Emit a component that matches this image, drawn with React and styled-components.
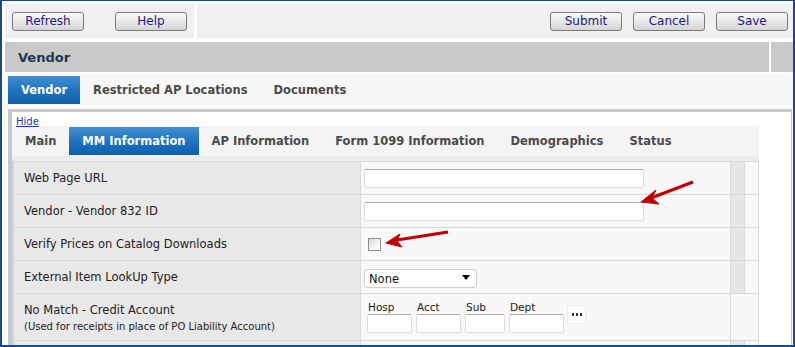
import styled, { createGlobalStyle } from "styled-components";

const GlobalStyle = createGlobalStyle`
  html, body { margin: 0; padding: 0; background: #fff; }
  body { font-family: "DejaVu Sans", Verdana, sans-serif; }
  * { box-sizing: border-box; }
`;

const Frame = styled.div`
  position: relative;
  width: 795px;
  height: 347px;
  overflow: hidden;
  background: #fff;
  border: 2px solid #1a4b7e;
  border-top-width: 1px;
  padding: 3px 0 0 3px;
`;

const Toolbar = styled.div`
  display: flex;
  gap: 3px;
  height: 34px;
`;

const ToolGroup = styled.div`
  display: flex;
  align-items: center;
  background: #f0f0f0;
  gap: ${(p) => p.$gap}px;
  ${(p) =>
    p.$right
      ? "flex: 1; justify-content: flex-end; padding-right: 5px;"
      : "width: 189px; padding-left: 7px;"}
`;

const Button = styled.button`
  width: 72px;
  height: 19px;
  padding: 0;
  border: 1px solid #7a7a7a;
  border-radius: 3px;
  background: linear-gradient(#fbfbfb, #e6e6e6 55%, #d4d4d4);
  font-family: "DejaVu Sans", Verdana, sans-serif;
  font-size: 12px;
  color: #24168c;
  line-height: 17px;
`;

const TitleBar = styled.div`
  display: flex;
  gap: 2px;
  height: 30px;
  margin-top: 4px;
`;

const TitleMain = styled.div`
  flex: 1;
  display: flex;
  align-items: center;
  padding-left: 13px;
  background: #c8c9c8;
  font-weight: bold;
  font-size: 13px;
  color: #1f3550;
`;

const TitleSide = styled.div`
  width: 22px;
  background: #c8c9c8;
`;

const TabRow = styled.div`
  display: flex;
  align-items: flex-start;
  height: 35px;
  margin-top: 2px;
  padding: 2px 0 0 3px;
  background: #f8f8f8;
`;

const SubTabRow = styled.div`
  display: flex;
  align-items: flex-start;
  width: 747px;
  height: 29px;
  padding-top: 1px;
  background: #f4f4f4;
  border-bottom: 5px solid #ececec;
  box-sizing: content-box;
`;

const Tab = styled.div`
  display: flex;
  align-items: center;
  height: 28px;
  padding: 0 13px;
  font-weight: bold;
  font-size: 11.5px;
  white-space: nowrap;
  color: ${(p) => (p.$active ? "#fff" : "#4a4a4a")};
  background: ${(p) =>
    p.$active ? "linear-gradient(#4390d2, #2074bf 50%, #0f5fab)" : "transparent"};
`;

const Panel = styled.div`
  margin: 0 1px 0 3px;
  height: 240px;
  border-top: 3px solid #c8c8c8;
  border-left: 4px solid #c8c8c8;
  border-right: 1px solid #c8c8c8;
  background: #fff;
`;

const HideRow = styled.div`
  height: 14px;
  padding: 2px 0 0 4px;
  line-height: 12px;
`;

const HideLink = styled.a`
  font-size: 10px;
  color: #1f3aa6;
  text-decoration: underline;
`;

const Table = styled.div`
  width: 747px;
  border-left: 2px solid #d4d4d4;
`;

const Row = styled.div`
  display: flex;
  height: ${(p) => p.$h}px;
  border-top: 1px solid #d8d8d8;
`;

const LabelCell = styled.div`
  width: 347px;
  display: flex;
  flex-direction: column;
  justify-content: center;
  padding-left: 10px;
  background: #e8e8e8;
  border-right: 1px solid #d8d8d8;
  font-size: 11.5px;
  color: #222;
`;

const Note = styled.div`
  font-size: 10px;
  margin-top: 4px;
`;

const ValueCell = styled.div`
  width: 370px;
  display: flex;
  align-items: center;
  padding-left: 3px;
  background: #f8f8f8;
  border-right: 1px solid #d8d8d8;
`;

const Gutter = styled.div`
  width: ${(p) => p.$w}px;
  background: ${(p) => (p.$shade ? "#e6e6e6" : "#f8f8f8")};
  border-right: 1px solid #d8d8d8;
`;

const TextInput = styled.input`
  width: ${(p) => p.$w}px;
  height: 19px;
  padding: 0 3px;
  border: 1px solid #dcdcdc;
  border-top-color: #a8a8a8;
  border-radius: 2px;
  background: #fff;
  font-family: inherit;
  font-size: 11px;
  outline: none;
`;

const Check = styled.input`
  appearance: none;
  width: 13px;
  height: 13px;
  margin: 0 0 0 4px;
  border: 1px solid #8c8c8c;
  background: linear-gradient(135deg, #d6d6d6, #f4f4f4 60%, #fff);
`;

const SelectBox = styled.div`
  position: relative;
  width: 113px;
  height: 19px;

  &::after {
    content: "";
    position: absolute;
    right: 7px;
    top: 7px;
    border-left: 4px solid transparent;
    border-right: 4px solid transparent;
    border-top: 5px solid #000;
    pointer-events: none;
  }
`;

const Select = styled.select`
  appearance: none;
  width: 100%;
  height: 100%;
  padding: 0 0 0 4px;
  border: 1px solid #cfcfcf;
  border-radius: 3px;
  background: #fff;
  font-family: inherit;
  font-size: 11.5px;
  color: #111;
  outline: none;
`;

const AcctFields = styled.div`
  display: flex;
  gap: 4px;
  margin-left: 3px;
`;

const Field = styled.div`
  display: flex;
  flex-direction: column;
`;

const FieldLabel = styled.span`
  height: 12px;
  padding-left: 1px;
  font-size: 10.5px;
  line-height: 11px;
  color: #222;
`;

const DotsButton = styled.button`
  width: 19px;
  height: 19px;
  margin-left: 3px;
  margin-top: -5px;
  padding: 0;
  display: flex;
  align-items: center;
  justify-content: center;
  border: 1px solid #ececec;
  background: #fff;
`;

const Overlay = styled.svg`
  position: absolute;
  top: -1px;
  left: -2px;
  width: 795px;
  height: 347px;
  pointer-events: none;
`;

const fields = [
  { name: "Hosp", w: 45 },
  { name: "Acct", w: 45 },
  { name: "Sub", w: 40 },
  { name: "Dept", w: 55 },
];

const Tail = ({ merged }) =>
  merged ? (
    <Gutter $w={28} />
  ) : (
    <>
      <Gutter $w={14} $shade />
      <Gutter $w={14} />
    </>
  );

export default function App() {
  return (
    <>
      <GlobalStyle />
      <Frame>
        <Toolbar>
          <ToolGroup $gap={31}>
            <Button>Refresh</Button>
            <Button>Help</Button>
          </ToolGroup>
          <ToolGroup $right $gap={11}>
            <Button>Submit</Button>
            <Button>Cancel</Button>
            <Button>Save</Button>
          </ToolGroup>
        </Toolbar>

        <TitleBar>
          <TitleMain>Vendor</TitleMain>
          <TitleSide />
        </TitleBar>

        <TabRow>
          <Tab $active>Vendor</Tab>
          <Tab>Restricted AP Locations</Tab>
          <Tab>Documents</Tab>
        </TabRow>

        <Panel>
          <HideRow>
            <HideLink href="#">Hide</HideLink>
          </HideRow>
          <SubTabRow>
            <Tab>Main</Tab>
            <Tab $active>MM Information</Tab>
            <Tab>AP Information</Tab>
            <Tab>Form 1099 Information</Tab>
            <Tab>Demographics</Tab>
            <Tab>Status</Tab>
          </SubTabRow>

          <Table>
            <Row $h={33}>
              <LabelCell>Web Page URL</LabelCell>
              <ValueCell>
                <TextInput $w={280} />
              </ValueCell>
              <Tail />
            </Row>
            <Row $h={33}>
              <LabelCell>Vendor - Vendor 832 ID</LabelCell>
              <ValueCell>
                <TextInput $w={280} />
              </ValueCell>
              <Tail />
            </Row>
            <Row $h={33}>
              <LabelCell>Verify Prices on Catalog Downloads</LabelCell>
              <ValueCell>
                <Check type="checkbox" />
              </ValueCell>
              <Tail />
            </Row>
            <Row $h={33}>
              <LabelCell>External Item LookUp Type</LabelCell>
              <ValueCell>
                <SelectBox>
                  <Select defaultValue="None">
                    <option>None</option>
                  </Select>
                </SelectBox>
              </ValueCell>
              <Tail />
            </Row>
            <Row $h={47}>
              <LabelCell>
                No Match - Credit Account
                <Note>(Used for receipts in place of PO Liability Account)</Note>
              </LabelCell>
              <ValueCell>
                <AcctFields>
                  {fields.map((f) => (
                    <Field key={f.name}>
                      <FieldLabel>{f.name}</FieldLabel>
                      <TextInput $w={f.w} />
                    </Field>
                  ))}
                </AcctFields>
                <DotsButton>
                  <svg width="10" height="3" viewBox="0 0 10 3">
                    <rect x="0" y="0" width="2" height="3" fill="#333" />
                    <rect x="4" y="0" width="2" height="3" fill="#333" />
                    <rect x="8" y="0" width="2" height="3" fill="#333" />
                  </svg>
                </DotsButton>
              </ValueCell>
              <Tail merged />
            </Row>
            <Row $h={33}>
              <LabelCell />
              <ValueCell />
              <Tail />
            </Row>
          </Table>
        </Panel>

        <Overlay viewBox="0 0 795 347">
          <g fill="#c00000" stroke="#c00000">
            <line x1="693" y1="182" x2="651" y2="198" strokeWidth="3" />
            <polygon points="641,202 656,190 652,198 659,204" strokeWidth="1" />
            <line x1="448" y1="232" x2="397" y2="240" strokeWidth="3" />
            <polygon points="386,243 400,234 397,241 402,247" strokeWidth="1" />
          </g>
        </Overlay>
      </Frame>
    </>
  );
}
